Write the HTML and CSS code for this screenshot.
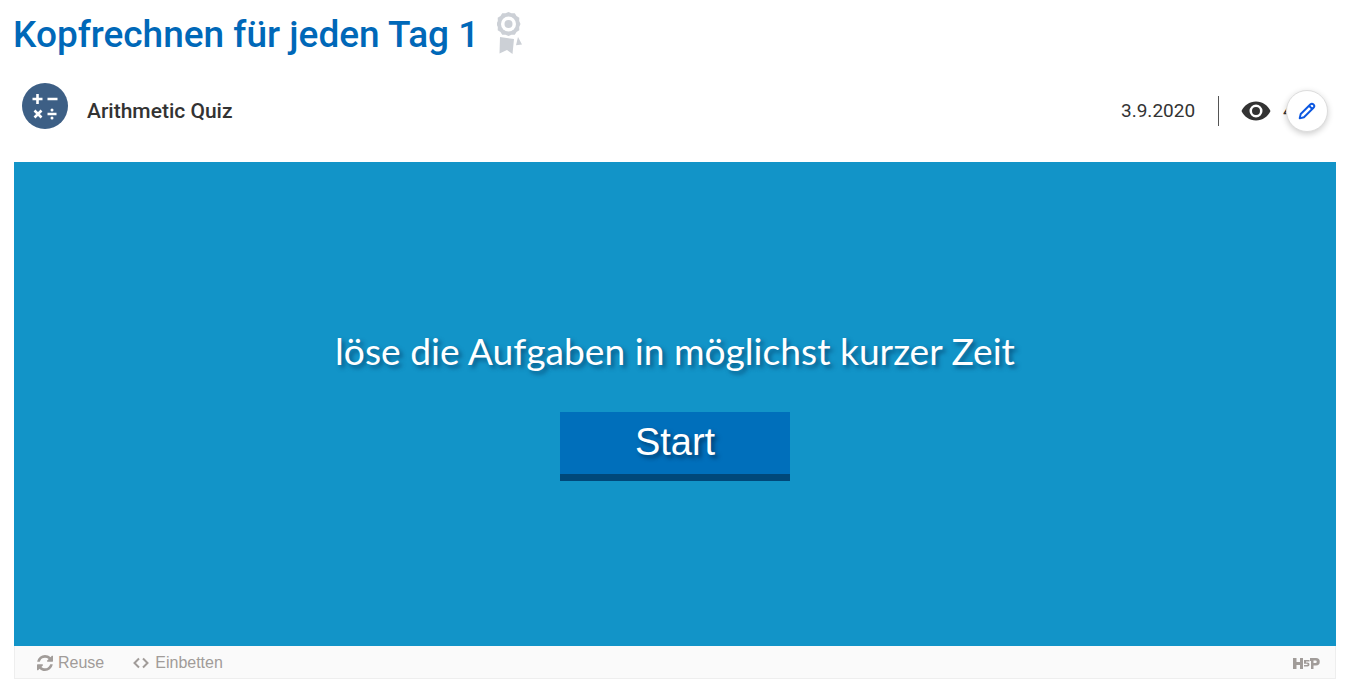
FILE: index.html
```html
<!DOCTYPE html>
<html lang="de">
<head>
<meta charset="utf-8">
<title>Kopfrechnen für jeden Tag 1</title>
<link rel="stylesheet" href="styles.css">
</head>
<body>
<main class="page">
  <header class="title-row">
    <h1 class="title">Kopfrechnen für jeden Tag 1</h1>
    <svg class="badge" viewBox="0 0 26 42" width="26" height="42" aria-hidden="true">
      <path fill="#ccd0d6" d="M11.500 0l3 1.300 3.300-.1 1.700 2.800 2.800 1.700-.1 3.300 1.300 3-1.300 3 .1 3.300-2.800 1.700-1.700 2.800-3.300-.1-3 1.300-3-1.300-3.300.1-1.700-2.800-2.800-1.700.1-3.300-1.300-3 1.300-3-.1-3.300 2.800-1.700 1.700-2.800 3.300.1z"/>
      <circle cx="11.500" cy="12" r="7.500" fill="#fff"/>
      <circle cx="11.500" cy="12" r="4" fill="#ccd0d6"/>
      <path fill="#ccd0d6" d="M3 25l14 2-1.500 15-5.500-4-7.500 3.500z"/>
      <path fill="#ccd0d6" d="M21 25l4 7.500-6 .8z"/>
    </svg>
  </header>
  <div class="meta-row">
    <div class="type">
      <svg class="type-icon" viewBox="0 0 46 46" width="46" height="46" aria-hidden="true">
        <circle cx="23" cy="23" r="23" fill="#3d5f85"/>
        <path stroke="#fff" stroke-width="2.600" fill="none" d="M10.500 16h10M15.500 11v10M25.500 16h10M12.500 27.500l7 7M19.500 27.500l-7 7M25.500 31h9"/>
        <circle cx="30" cy="27" r="1.500" fill="#fff"/>
        <circle cx="30" cy="35" r="1.500" fill="#fff"/>
      </svg>
      <span class="type-name">Arithmetic Quiz</span>
    </div>
    <div class="stats">
      <span class="date">3.9.2020</span>
      <span class="divider"></span>
      <svg class="eye" viewBox="0 0 30 20" width="30" height="20" aria-hidden="true">
        <path fill="#333" fill-rule="evenodd" d="M15 .5C8.500.5 3 4.500.5 10 3 15.500 8.500 19.500 15 19.500S27 15.500 29.500 10C27 4.500 21.500.5 15 .5zM15 16.500a6.500 6.500 0 1 1 0-13 6.500 6.500 0 0 1 0 13zM15 6a4 4 0 1 0 0 8 4 4 0 0 0 0-8z"/>
      </svg>
      <span class="views">4</span>
      <button class="edit" type="button" aria-label="Bearbeiten">
        <svg viewBox="0 0 16 16" width="18" height="18" aria-hidden="true">
          <path fill="none" stroke="#0b57e0" stroke-width="1.700" stroke-linejoin="round" d="M1.500 14.500l.9-3.800 8.500-8.500a1.700 1.700 0 0 1 2.900 2.900l-8.500 8.500zM9.800 3.300l2.900 2.900"/>
        </svg>
      </button>
    </div>
  </div>
  <section class="stage">
    <p class="intro">löse die Aufgaben in möglichst kurzer Zeit</p>
    <button class="start" type="button">Start</button>
  </section>
  <footer class="actions">
    <div class="action-list">
      <span class="action">
        <svg viewBox="128 128 1536 1536" width="16" height="16" aria-hidden="true">
          <path fill="#a19c99" d="M1639 1056q0 5-1 7-64 268-268 434.500t-478 166.500q-146 0-282.500-55t-243.500-157l-129 129q-19 19-45 19t-45-19-19-45v-448q0-26 19-45t45-19h448q26 0 45 19t19 45-19 45l-137 137q71 66 161 102t187 36q134 0 250-65t186-179q11-17 53-117 8-23 30-23h192q13 0 22.500 9.500t9.500 22.500zm25-800v448q0 26-19 45t-45 19h-448q-26 0-45-19t-19-45 19-45l138-138q-148-137-349-137-134 0-250 65t-186 179q-11 17-53 117-8 23-30 23h-199q-13 0-22.500-9.500t-9.500-22.500v-7q65-268 270-434.500t480-166.500q146 0 284 55.500t245 156.500l130-129q19-19 45-19t45 19 19 45z"/>
        </svg>
        Reuse
      </span>
      <span class="action">
        <svg viewBox="0 0 18 12" width="18" height="12" aria-hidden="true">
          <path fill="none" stroke="#a19c99" stroke-width="2" d="M7 1.500L2.500 6 7 10.500M11 1.500L15.500 6 11 10.500"/>
        </svg>
        Einbetten
      </span>
    </div>
    <svg class="h5p" viewBox="0 0 27 13" width="27" height="13" aria-hidden="true">
      <path fill="#a19c99" d="M0 1h3.500v4h3.500V1h3v11H7V8H3.500v4H0z"/>
      <path fill="#a19c99" d="M11 3h5.500v1.500H13v1h1.500a2 2 0 0 1 0 4H11V8h3a.6.6 0 0 0 0-1.200h-3z"/>
      <path fill="#a19c99" fill-rule="evenodd" d="M17 1h6a3.500 3.500 0 0 1 0 7.500h-2.500V12H18V4h-1zM20.500 3.500v2.500H22.500a1.250 1.250 0 0 0 0-2.500z"/>
    </svg>
  </footer>
</main>
</body>
</html>
```
FILE: styles.css
```css
* { box-sizing: border-box; }
html, body { margin: 0; background: #fff; }
body { height: 692px; overflow: hidden; font-family: Roboto, sans-serif; }
.page { padding: 0 16px 0 14px; }
.title-row { display: flex; align-items: flex-start; gap: 18px; height: 72px; padding-top: 12px; }
.title { margin: 0 0 0 -1px; font-size: 37px; line-height: 45px; font-weight: 500; color: #0068b8; }
.badge { display: block; }
.meta-row { display: flex; justify-content: space-between; height: 90px; padding: 11px 0 0 8px; }
.type { display: flex; align-items: center; gap: 19px; height: 46px; }
.type-icon { display: block; }
.type-name { font-size: 21px; font-weight: 500; color: #333; margin-top: 9px; }
.stats { display: flex; align-items: center; height: 54px; margin-right: 8px; width: 207px; position: relative; }
.date { font-size: 19px; color: #333; min-width: 75px; }
.divider { width: 1px; height: 30px; background: #555; margin: 2px 22px 0; }
.eye { display: block; margin-top: 2px; }
.views { font-size: 19px; color: #333; margin-left: 12px; }
.edit { position: absolute; right: 0; top: 7px; width: 42px; height: 42px; border: 1px solid #ddd; border-radius: 50%; background: #fff; box-shadow: 0 2px 6px rgba(0,0,0,.2); display: flex; align-items: center; justify-content: center; padding: 0; }
.stage { height: 484px; background: #1294c8; display: flex; flex-direction: column; align-items: center; padding-top: 164px; }
.intro { margin: 0; font-family: Lato, sans-serif; font-size: 37.2px; line-height: 50px; color: #fff; text-shadow: 3px 3px 4px rgba(0,50,90,.6); }
.start { margin-top: 36px; width: 230px; height: 69px; border: 0; border-bottom: 7px solid #00487a; background: #006fbb; color: #fff; font-family: "Liberation Sans", sans-serif; font-size: 38px; padding: 0 0 2px; text-shadow: 3px 3px 4px rgba(0,30,60,.6); }
.actions { height: 33px; background: #fafafa; border: 1px solid #eee; border-top: 0; display: flex; align-items: center; justify-content: space-between; padding: 2px 15px 0 22px; font-family: "Liberation Sans", sans-serif; font-size: 16px; color: #a19c99; }
.action-list { display: flex; gap: 28px; }
.action { display: flex; align-items: center; gap: 5px; }
.h5p { display: block; }
```
